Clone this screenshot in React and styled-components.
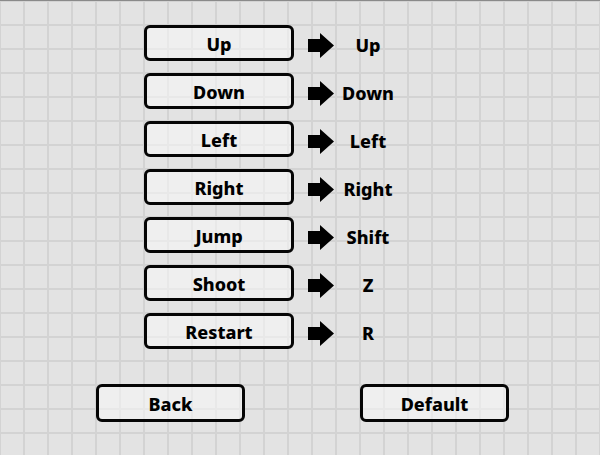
import React from 'react';
import styled, { createGlobalStyle } from 'styled-components';

const GlobalStyle = createGlobalStyle`
  html, body {
    margin: 0;
    padding: 0;
  }
  body {
    font-family: "Noto Sans", "DejaVu Sans", sans-serif;
  }
`;

const Screen = styled.div`
  width: 600px;
  height: 455px;
  box-sizing: border-box;
  overflow: hidden;
  border-top: 1px solid #8a8a8a;
  background-color: #e3e3e3;
  background-image:
    linear-gradient(to right, #d3d3d3 2px, transparent 2px),
    linear-gradient(to bottom, #d3d3d3 2px, transparent 2px);
  background-size: 24px 24px;
  background-position: -1px -1px, 0 -1px;
  display: flex;
  flex-direction: column;
`;

const Bindings = styled.div`
  display: flex;
  flex-direction: column;
  gap: 12px;
  padding: 24px 0 0 144px;
`;

const Row = styled.div`
  display: flex;
  align-items: center;
  height: 36px;
`;

const Key = styled.button`
  box-sizing: border-box;
  width: ${props => props.width || 150}px;
  height: ${props => props.height || 36}px;
  border: 3px solid #050505;
  border-radius: 6px;
  background: rgba(250, 250, 250, 0.55);
  font-family: "Noto Sans", "DejaVu Sans", sans-serif;
  font-weight: 800;
  font-size: 18px;
  line-height: 1;
  color: #000;
  padding: 2px 0 0 0;
  display: flex;
  align-items: center;
  justify-content: center;
  cursor: pointer;
  &:focus {
    outline: none;
  }
`;

const Arrow = styled.svg`
  margin-left: 14px;
  margin-top: 4px;
  flex: none;
`;

const Target = styled.span`
  width: 60px;
  margin-left: 4px;
  padding-top: 3px;
  text-align: center;
  font-weight: 800;
  font-size: 18px;
  line-height: 1;
  color: #000;
`;

const Footer = styled.div`
  display: flex;
  justify-content: space-between;
  padding: 35px 91px 0 96px;
`;

const bindings = [
  ['Up', 'Up'],
  ['Down', 'Down'],
  ['Left', 'Left'],
  ['Right', 'Right'],
  ['Jump', 'Shift'],
  ['Shoot', 'Z'],
  ['Restart', 'R'],
];

const RightArrow = () => (
  <Arrow width="26" height="25" viewBox="0 0 26 25">
    <path d="M0 6 H12 V0 L26 12.5 L12 25 V19 H0 Z" fill="#000" />
  </Arrow>
);

export default function App() {
  return (
    <>
      <GlobalStyle />
      <Screen>
        <Bindings>
          {bindings.map(([action, key]) => (
            <Row key={action}>
              <Key type="button">{action}</Key>
              <RightArrow />
              <Target>{key}</Target>
            </Row>
          ))}
        </Bindings>
        <Footer>
          <Key type="button" height={38} width={149}>Back</Key>
          <Key type="button" height={38} width={149}>Default</Key>
        </Footer>
      </Screen>
    </>
  );
}
